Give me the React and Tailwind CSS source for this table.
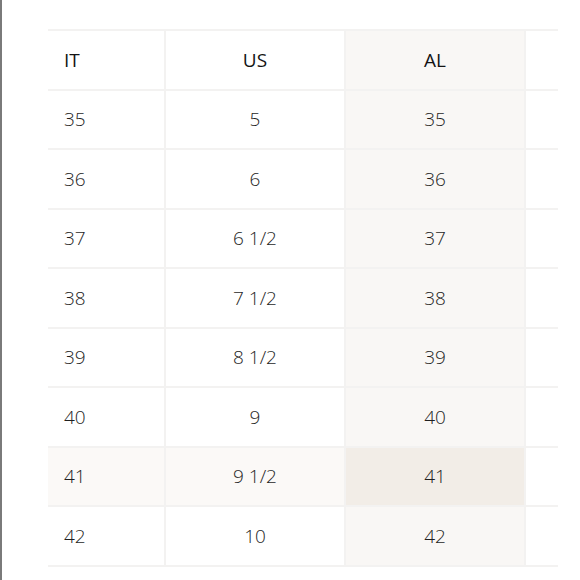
const rows = [
  ["35", "5", "35"],
  ["36", "6", "36"],
  ["37", "6 1/2", "37"],
  ["38", "7 1/2", "38"],
  ["39", "8 1/2", "39"],
  ["40", "9", "40"],
  ["41", "9 1/2", "41"],
  ["42", "10", "42"],
]

function Row({ cells, header, active }) {
  const rowBg = active ? "bg-[#fbf9f7]" : ""
  const head = header ? "font-medium text-[#141414]" : ""
  return (
    <div className="grid grid-cols-[118px_180px_180px_30px] h-[59.5px] border-b-2 border-[#f3f2f1]">
      <div className={`flex items-center pl-4 border-r-2 border-[#f3f2f1] ${rowBg} ${head}`}>
        {cells[0]}
      </div>
      <div className={`flex items-center justify-center border-r-2 border-[#f3f2f1] ${rowBg} ${head}`}>
        {cells[1]}
      </div>
      <div
        className={`flex items-center justify-center border-r-2 border-[#f3f2f1] ${
          active ? "bg-[#f2ede7]" : "bg-[#f9f7f5]"
        } ${head}`}
      >
        {cells[2]}
      </div>
      <div />
    </div>
  )
}

export default function App() {
  return (
    <div className="h-[580px] w-[580px] bg-white border-l-2 border-[#7a7a7a] overflow-hidden font-['Open_Sans',sans-serif] font-light text-[19px] text-[#1f1f1f]">
      <div className="ml-[46px] mt-[29px] w-[510px] border-t-2 border-[#f3f2f1]">
        <Row cells={["IT", "US", "AL"]} header />
        {rows.map((r) => (
          <Row key={r[0]} cells={r} active={r[0] === "41"} />
        ))}
      </div>
    </div>
  )
}
